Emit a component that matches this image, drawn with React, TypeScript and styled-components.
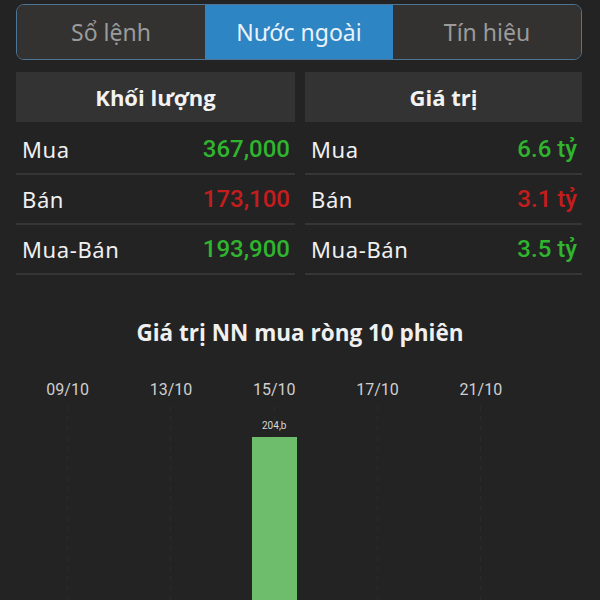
import React from "react";
import styled, { createGlobalStyle } from "styled-components";

const GlobalStyle = createGlobalStyle`
  html, body {
    margin: 0;
    padding: 0;
    background: #232323;
  }
  body {
    font-family: Roboto, "Noto Sans", sans-serif;
    color: #eee;
  }
`;

type Row = { label: string; value: string; up: boolean };

const volumeRows: Row[] = [
  { label: "Mua", value: "367,000", up: true },
  { label: "Bán", value: "173,100", up: false },
  { label: "Mua-Bán", value: "193,900", up: true },
];

const valueRows: Row[] = [
  { label: "Mua", value: "6.6 tỷ", up: true },
  { label: "Bán", value: "3.1 tỷ", up: false },
  { label: "Mua-Bán", value: "3.5 tỷ", up: true },
];

const sessions = [
  { date: "09/10", value: 0 },
  { date: "13/10", value: 0 },
  { date: "15/10", value: 204 },
  { date: "17/10", value: 0 },
  { date: "21/10", value: 0 },
];

const App = () => {
  return (
    <Page>
      <GlobalStyle />
      <Tabs>
        <Tab>Sổ lệnh</Tab>
        <Tab active>Nước ngoài</Tab>
        <Tab>Tín hiệu</Tab>
      </Tabs>

      <Columns>
        <Column>
          <Header>Khối lượng</Header>
          {volumeRows.map((r) => (
            <DataRow key={r.label}>
              <Label>{r.label}</Label>
              <Value up={r.up}>{r.value}</Value>
            </DataRow>
          ))}
        </Column>
        <Column>
          <Header>Giá trị</Header>
          {valueRows.map((r) => (
            <DataRow key={r.label}>
              <Label>{r.label}</Label>
              <Value up={r.up}>{r.value}</Value>
            </DataRow>
          ))}
        </Column>
      </Columns>

      <ChartTitle>Giá trị NN mua ròng 10 phiên</ChartTitle>
      <Chart>
        {sessions.map((s) => (
          <Slot key={s.date}>
            <DateLabel>{s.date}</DateLabel>
            <Plot>
              {s.value > 0 && (
                <>
                  <BarValue>{s.value},b</BarValue>
                  <Bar style={{ height: s.value }} />
                </>
              )}
            </Plot>
          </Slot>
        ))}
      </Chart>
    </Page>
  );
};

const Page = styled.div`
  width: 600px;
  height: 600px;
  overflow: hidden;
  padding: 4px 18px 0 16px;
  box-sizing: border-box;
`;

const Tabs = styled.div`
  display: grid;
  grid-template-columns: 1fr 1fr 1fr;
  height: 56px;
  border: 1.5px solid #4d7595;
  border-radius: 8px;
  overflow: hidden;
  box-sizing: border-box;
`;

const Tab = styled.div<{ active?: boolean }>`
  display: flex;
  align-items: center;
  justify-content: center;
  font-family: "Noto Sans", sans-serif;
  font-size: 23px;
  color: ${(p) => (p.active ? "#eaf2fa" : "#9b9b9b")};
  background: ${(p) => (p.active ? "#2d85c4" : "#333231")};
`;

const Columns = styled.div`
  display: grid;
  grid-template-columns: 279px 277px;
  gap: 10px;
  margin-top: 12px;
`;

const Column = styled.div`
  display: flex;
  flex-direction: column;
`;

const Header = styled.div`
  height: 50px;
  display: flex;
  align-items: center;
  justify-content: center;
  background: #333333;
  font-family: "Open Sans", sans-serif;
  font-weight: 700;
  font-size: 22px;
  color: #f2f2f2;
  margin-bottom: 3px;
`;

const DataRow = styled.div`
  height: 48px;
  display: flex;
  align-items: center;
  justify-content: space-between;
  padding: 0 5px 0 6px;
  border-bottom: 2px solid #363636;
`;

const Label = styled.span`
  font-family: "Noto Sans", sans-serif;
  font-size: 22px;
  letter-spacing: 0.6px;
  color: #f0f0f0;
`;

const Value = styled.span<{ up: boolean }>`
  font-size: 24px;
  font-weight: 500;
  color: ${(p) => (p.up ? "#2fb52e" : "#c31d1d")};
`;

const ChartTitle = styled.div`
  margin-top: 42px;
  text-align: center;
  font-family: "Open Sans", sans-serif;
  font-weight: 700;
  font-size: 22.5px;
  color: #f0f0f0;
  padding-left: 2px;
`;

const Chart = styled.div`
  display: grid;
  grid-template-columns: repeat(5, 103.3px);
  margin-top: 32px;
`;

const Slot = styled.div`
  display: flex;
  flex-direction: column;
  align-items: center;
`;

const DateLabel = styled.div`
  font-size: 16px;
  color: #cfcfcf;
  height: 20px;
  line-height: 20px;
`;

const Plot = styled.div`
  align-self: stretch;
  height: 200px;
  margin-top: 6px;
  display: flex;
  flex-direction: column;
  align-items: center;
  padding-top: 14px;
  background-image: linear-gradient(to bottom, #2a2a2a 55%, transparent 55%);
  background-size: 1px 10px;
  background-position: center top;
  background-repeat: repeat-y;
`;

const BarValue = styled.div`
  font-size: 10px;
  color: #d8d8d8;
  line-height: 12px;
  margin-bottom: 5px;
`;

const Bar = styled.div`
  width: 45px;
  background: #6dbd6c;
`;

export default App;
